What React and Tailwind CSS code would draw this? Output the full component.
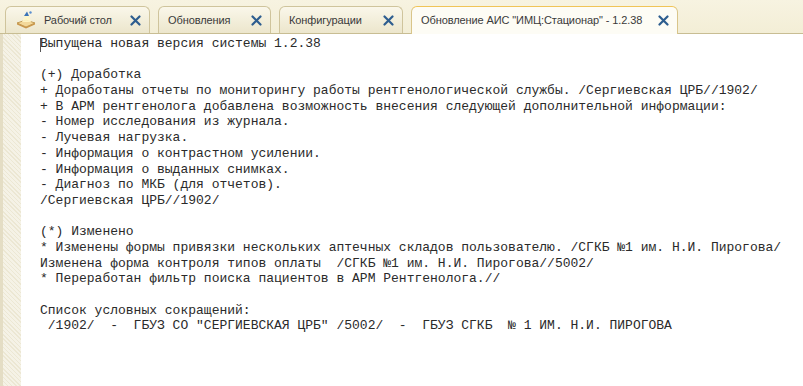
const tabs = [
  { title: "Рабочий стол", w: "w-[145px]", icon: true },
  { title: "Обновления", w: "w-[113px]" },
  { title: "Конфигурации", w: "w-[124px]" },
  { title: 'Обновление АИС "ИМЦ:Стационар" - 1.2.38', w: "w-[267px]", active: true },
];

const lines = [
  "Выпущена новая версия системы 1.2.38",
  "",
  "(+) Доработка",
  "+ Доработаны отчеты по мониторингу работы рентгенологической службы. /Сергиевская ЦРБ//1902/",
  "+ В АРМ рентгенолога добавлена возможность внесения следующей дополнительной информации:",
  "- Номер исследования из журнала.",
  "- Лучевая нагрузка.",
  "- Информация о контрастном усилении.",
  "- Информация о выданных снимках.",
  "- Диагноз по МКБ (для отчетов).",
  "/Сергиевская ЦРБ//1902/",
  "",
  "(*) Изменено",
  "* Изменены формы привязки нескольких аптечных складов пользователю. /СГКБ №1 им. Н.И. Пирогова/",
  "Изменена форма контроля типов оплаты  /СГКБ №1 им. Н.И. Пирогова//5002/",
  "* Переработан фильтр поиска пациентов в АРМ Рентгенолога.//",
  "",
  "Список условных сокращений:",
  " /1902/  -  ГБУЗ СО \"СЕРГИЕВСКАЯ ЦРБ\" /5002/  -  ГБУЗ СГКБ  № 1 ИМ. Н.И. ПИРОГОВА",
];

function DeskIcon() {
  return (
    <svg width="22" height="20" viewBox="0 0 22 20" className="shrink-0">
      <path d="M2 13 L11 10 L20 13 L11 17 Z" fill="#f3d89a" stroke="#b88a3c" strokeWidth="0.8" />
      <path d="M2 13 L2 14.5 L11 18.5 L20 14.5 L20 13 L11 17 Z" fill="#c9964a" />
      <path d="M7 12 L10 5 L14 5 L16 12 Z" fill="#fff6c8" opacity="0.9" />
      <path d="M9 6 L12 1.5 L14 6 Z" fill="#3c74b8" />
      <circle cx="15.5" cy="2.5" r="1.2" fill="#5b8fd0" />
    </svg>
  );
}

function Tab({ title, w, icon, active }) {
  return (
    <div
      className={
        "relative flex shrink-0 items-center justify-between rounded-t-[6px] border border-b-0 pl-[9px] pr-[8px] " +
        w +
        (active
          ? " -mb-px h-[28px] border-[#d9c58a] border-t-[#f0c457] bg-[#fdfcf5]"
          : " h-[27px] border-[#cfc49c] bg-gradient-to-b from-[#faf7ea] to-[#ece6cc]")
      }
    >
      <div className="flex items-center gap-[7px]">
        {icon && <DeskIcon />}
        <span className="whitespace-nowrap text-[11px] tracking-[-0.1px] text-[#3a3a3a] [font-family:'Liberation_Sans',Arial,sans-serif]">
          {title}
        </span>
      </div>
      <svg width="11" height="11" viewBox="0 0 11 11" className="shrink-0">
        <path d="M1.5 1.5 L9.5 9.5 M9.5 1.5 L1.5 9.5" stroke="#2d5d8f" strokeWidth="2.2" strokeLinecap="round" />
      </svg>
    </div>
  );
}

export default function App() {
  return (
    <div className="flex h-[386px] w-[803px] flex-col overflow-hidden bg-white">
      <div className="flex h-[34px] shrink-0 items-end gap-[8px] border-b border-[#c8bd93] bg-gradient-to-b from-[#f7f3e1] to-[#f3eed6] pl-[5px]">
        {tabs.map((t) => (
          <Tab key={t.title} {...t} />
        ))}
      </div>
      <div className="flex flex-1">
        <div className="w-[21px] shrink-0 border-l-[3px] border-[#e4ddc4] bg-[#f1eddd] bg-[repeating-linear-gradient(45deg,#ece7d3_0px,#ece7d3_1px,#f5f2e6_1px,#f5f2e6_3px)]" />
        <div className="relative flex-1 pl-[19px] pt-[2px]">
          <span className="absolute left-[19px] top-[4px] h-[14px] w-px bg-[#555]" />
          <pre className="text-[13px] leading-[15.7px] text-[#2a2a2a] [font-family:'Liberation_Mono','Courier_New',monospace]">
            {lines.map((l, i) => (
              <div key={i} className="h-[15.7px] whitespace-pre">
                {l}
              </div>
            ))}
          </pre>
        </div>
      </div>
    </div>
  );
}
